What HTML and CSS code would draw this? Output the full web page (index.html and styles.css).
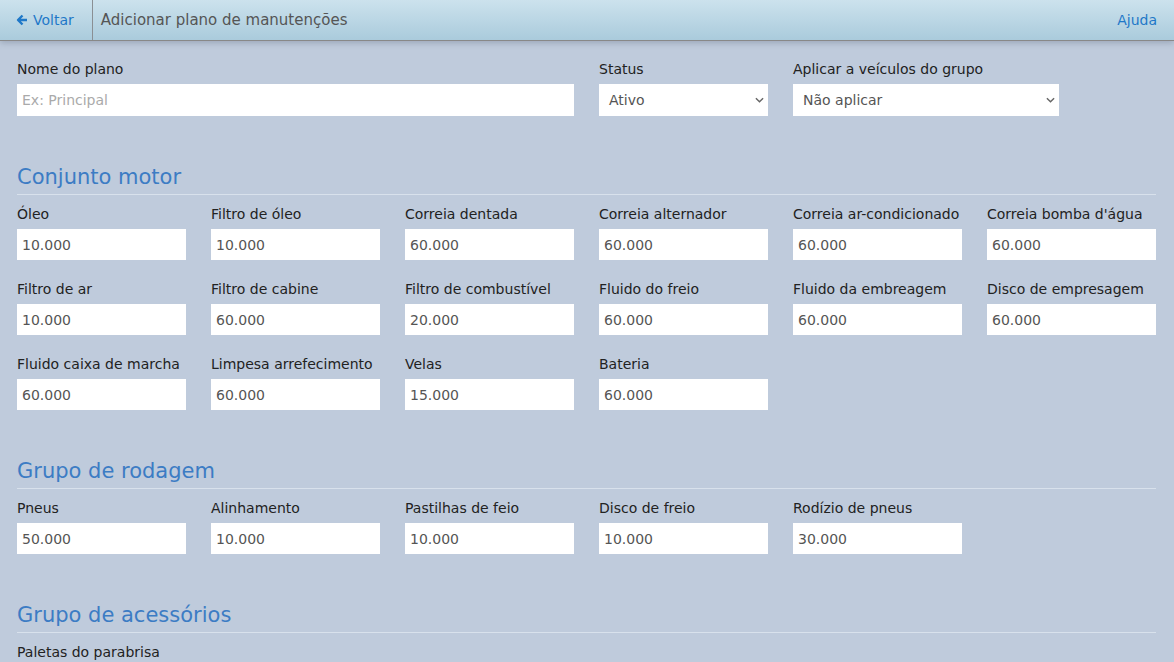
FILE: index.html
```html
<!DOCTYPE html>
<html lang="pt">
<head>
<meta charset="utf-8">
<title>Adicionar plano de manutenções</title>
<link rel="stylesheet" href="styles.css">
</head>
<body>
<header class="topbar">
  <a class="back" href="#"><svg class="back-icon" viewBox="0 0 12 12" width="12" height="12"><path d="M6.5 1.5 L2 6 L6.5 10.5 M2.2 6 H11" fill="none" stroke="currentColor" stroke-width="2.4" stroke-linejoin="round"/></svg>Voltar</a>
  <div class="title">Adicionar plano de manutenções</div>
  <a class="help" href="#">Ajuda</a>
</header>
<main class="page">
  <div class="top-row">
    <div class="field field-name">
      <label>Nome do plano</label>
      <input class="input" type="text" placeholder="Ex: Principal">
    </div>
    <div class="field field-status">
      <label>Status</label>
      <div class="select"><span>Ativo</span><svg class="chev" viewBox="0 0 10 6" width="9" height="6"><path d="M1 1 L5 5 L9 1" fill="none" stroke="currentColor" stroke-width="1.6"/></svg></div>
    </div>
    <div class="field field-apply">
      <label>Aplicar a veículos do grupo</label>
      <div class="select"><span>Não aplicar</span><svg class="chev" viewBox="0 0 10 6" width="9" height="6"><path d="M1 1 L5 5 L9 1" fill="none" stroke="currentColor" stroke-width="1.6"/></svg></div>
    </div>
  </div>

  <section class="section">
    <h2 class="section-title">Conjunto motor</h2>
    <div class="grid">
      <div class="field"><label>Óleo</label><input class="input" type="text" value="10.000"></div>
      <div class="field"><label>Filtro de óleo</label><input class="input" type="text" value="10.000"></div>
      <div class="field"><label>Correia dentada</label><input class="input" type="text" value="60.000"></div>
      <div class="field"><label>Correia alternador</label><input class="input" type="text" value="60.000"></div>
      <div class="field"><label>Correia ar-condicionado</label><input class="input" type="text" value="60.000"></div>
      <div class="field"><label>Correia bomba d'água</label><input class="input" type="text" value="60.000"></div>
      <div class="field"><label>Filtro de ar</label><input class="input" type="text" value="10.000"></div>
      <div class="field"><label>Filtro de cabine</label><input class="input" type="text" value="60.000"></div>
      <div class="field"><label>Filtro de combustível</label><input class="input" type="text" value="20.000"></div>
      <div class="field"><label>Fluido do freio</label><input class="input" type="text" value="60.000"></div>
      <div class="field"><label>Fluido da embreagem</label><input class="input" type="text" value="60.000"></div>
      <div class="field"><label>Disco de empresagem</label><input class="input" type="text" value="60.000"></div>
      <div class="field"><label>Fluido caixa de marcha</label><input class="input" type="text" value="60.000"></div>
      <div class="field"><label>Limpesa arrefecimento</label><input class="input" type="text" value="60.000"></div>
      <div class="field"><label>Velas</label><input class="input" type="text" value="15.000"></div>
      <div class="field"><label>Bateria</label><input class="input" type="text" value="60.000"></div>
    </div>
  </section>

  <section class="section">
    <h2 class="section-title">Grupo de rodagem</h2>
    <div class="grid">
      <div class="field"><label>Pneus</label><input class="input" type="text" value="50.000"></div>
      <div class="field"><label>Alinhamento</label><input class="input" type="text" value="10.000"></div>
      <div class="field"><label>Pastilhas de feio</label><input class="input" type="text" value="10.000"></div>
      <div class="field"><label>Disco de freio</label><input class="input" type="text" value="10.000"></div>
      <div class="field"><label>Rodízio de pneus</label><input class="input" type="text" value="30.000"></div>
    </div>
  </section>

  <section class="section">
    <h2 class="section-title">Grupo de acessórios</h2>
    <div class="grid">
      <div class="field"><label>Paletas do parabrisa</label><input class="input" type="text" value="10.000"></div>
    </div>
  </section>
</main>
</body>
</html>
```

FILE: styles.css
```css
html, body {
  margin: 0;
  padding: 0;
}
body {
  background: #bfcbdc;
  font-family: "DejaVu Sans", Verdana, sans-serif;
  font-size: 14px;
  color: #222;
  overflow: hidden;
  height: 662px;
}
.topbar {
  height: 41px;
  box-sizing: border-box;
  display: flex;
  align-items: stretch;
  background: linear-gradient(#cce2ed, #aacbdc);
  border-bottom: 1px solid #888;
  box-shadow: 0 2px 6px rgba(90, 100, 120, 0.35);
  position: relative;
  z-index: 1;
}
.back {
  display: flex;
  align-items: center;
  gap: 5px;
  padding: 0 18px 0 16px;
  color: #1f78c8;
  text-decoration: none;
  font-size: 14px;
  border-right: 1px solid #8a8f94;
}
.back-icon {
  display: block;
  color: #1f78c8;
}
.title {
  display: flex;
  align-items: center;
  padding-left: 8px;
  color: #555;
  font-size: 15px;
  flex: 1;
}
.help {
  display: flex;
  align-items: center;
  padding-right: 17px;
  color: #1f78c8;
  text-decoration: none;
  font-size: 14px;
}
.page {
  padding: 20px 18px 0 17px;
}
.top-row {
  display: flex;
  gap: 25px;
}
.field {
  display: flex;
  flex-direction: column;
}
.field label {
  font-size: 14px;
  line-height: 16px;
  color: #222;
  margin-bottom: 7px;
  white-space: nowrap;
}
.field-name { width: 557px; }
.field-status { width: 169px; }
.field-apply { width: 266px; }
.input {
  box-sizing: border-box;
  width: 100%;
  height: 32px;
  border: 0;
  outline: none;
  background: #fff;
  padding: 0 5px;
  font-family: "DejaVu Sans", Verdana, sans-serif;
  font-size: 14px;
  color: #555;
  margin: 0;
}
.input::placeholder {
  color: #aaa;
}
.select {
  box-sizing: border-box;
  height: 32px;
  background: #fff;
  display: flex;
  align-items: center;
  justify-content: space-between;
  padding: 0 4px 0 10px;
  font-size: 14px;
  color: #555;
}
.chev {
  color: #666;
  display: block;
}
.section {
  margin-top: 47px;
}
.section-title {
  margin: 0;
  font-weight: normal;
  font-size: 21px;
  line-height: 28px;
  color: #3c7cc4;
  padding-bottom: 3px;
  border-bottom: 1px solid #d8e1ec;
  margin-bottom: 11px;
}
.grid {
  display: grid;
  grid-template-columns: repeat(6, 169px);
  column-gap: 25px;
  row-gap: 21px;
}
.grid .input {
  height: 31px;
}
```
